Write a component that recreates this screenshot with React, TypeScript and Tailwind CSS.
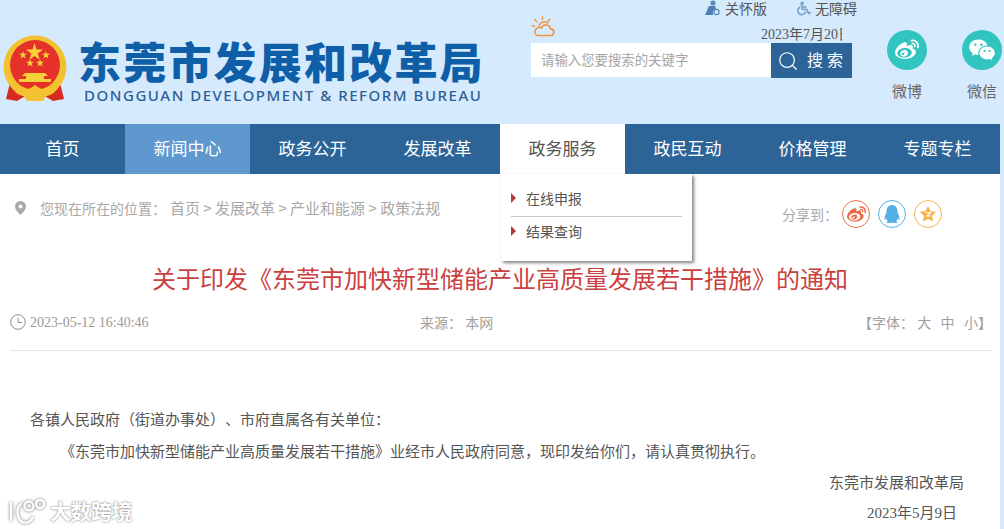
import { Search } from 'lucide-react';
import { FaWeibo, FaQq, FaWheelchair } from 'react-icons/fa';
import { RiWechatFill } from 'react-icons/ri';

const navItems = ['首页', '新闻中心', '政务公开', '发展改革', '政务服务', '政民互动', '价格管理', '专题专栏'];

function Emblem() {
  return (
    <svg width="64" height="68" viewBox="0 0 64 68">
      <path d="M8 44 L3 64 L14 66 L24 60 H40 L50 66 L61 64 L56 44 Z" fill="#d92a22" />
      <circle cx="32" cy="32" r="31.5" fill="#f2c230" />
      <circle cx="32" cy="30" r="25" fill="#e5312a" />
      <path d="M31.500 8 l2 6.500 h6.500 l-5.300 4 2 6.300 -5.200 -3.900 -5.200 3.900 2 -6.300 -5.300 -4 h6.500 z" fill="#f6d13b" />
      <g fill="#f6d13b">
        <path d="M20 16 l1 2.800 h3 l-2.400 1.800 .9 2.900 -2.500 -1.800 -2.500 1.800 .9 -2.900 -2.400 -1.800 h3 z" />
        <path d="M43 16 l1 2.800 h3 l-2.400 1.800 .9 2.900 -2.500 -1.800 -2.500 1.800 .9 -2.900 -2.400 -1.800 h3 z" />
        <path d="M27 24 l1 2.800 h3 l-2.400 1.800 .9 2.900 -2.500 -1.800 -2.500 1.800 .9 -2.900 -2.400 -1.800 h3 z" />
        <path d="M37 24 l1 2.800 h3 l-2.400 1.800 .9 2.900 -2.500 -1.800 -2.500 1.800 .9 -2.900 -2.400 -1.800 h3 z" />
        <path d="M22 38 h20 l3 3 h-4 v3 h7 v3 H16 v-3 h7 v-3 h-4 z" />
      </g>
      <path d="M11 46 C16 58 24 56 32 50 C40 56 48 58 53 46 L56 50 C50 64 40 62 32 56 C24 62 14 64 8 50 Z" fill="#f2c230" />
      <path d="M20 60 H44 L40 66 H24 Z" fill="#f2c230" />
    </svg>
  );
}

function WeatherIcon() {
  return (
    <svg width="24" height="21" viewBox="0 0 24 22" fill="none" stroke="#ee9236" strokeWidth="1.600" strokeLinecap="round">
      <path d="M8 10 a5.500 5.500 0 0 1 9 -2.500" />
      <path d="M11.500 1 v2.500 M3.500 4 l2 2 M19 3.500 l-1.500 1.700 M1 10.500 h2" />
      <path d="M6 20.500 h13.500 a3.500 3.500 0 0 0 .5 -7 a5 5 0 0 0 -9.500 -1 a4 4 0 0 0 -4.500 8 z" />
    </svg>
  );
}

function CareIcon() {
  return (
    <svg width="16" height="16" viewBox="0 0 16 16">
      <circle cx="9" cy="3" r="2.600" fill="#5b8bbb" />
      <path d="M5 6 h6 l1 3 a4 4 0 0 0 -3 5 v1 H1 Z" fill="#4f80b3" />
      <circle cx="12.500" cy="12" r="2.600" fill="none" stroke="#5b8bbb" strokeWidth="1.200" />
    </svg>
  );
}

function PinIcon() {
  return (
    <svg width="11" height="14" viewBox="0 0 11 14">
      <path fillRule="evenodd" d="M5.500 0 a5.500 5.500 0 0 1 5.500 5.500 c0 3 -3.500 6.500 -5.500 8.500 c-2 -2 -5.500 -5.500 -5.500 -8.500 a5.500 5.500 0 0 1 5.500 -5.500 z M5.500 3.500 a2 2 0 1 0 0 4 a2 2 0 0 0 0 -4 z" fill="#a8a8a8" />
    </svg>
  );
}

function ClockIcon() {
  return (
    <svg width="16" height="16" viewBox="0 0 16 16" fill="none" stroke="#8e8e8e" strokeWidth="1">
      <circle cx="8" cy="8" r="7.300" />
      <path d="M8 3.500 V8.500 H12" />
    </svg>
  );
}

function WatermarkLogo() {
  return (
    <svg width="38" height="28" viewBox="0 0 38 28" fill="none" stroke="#ffffff" strokeWidth="2.400" className="drop-shadow-[0_0_1.500px_rgba(90,90,90,0.9)]">
      <path d="M3 5 V24" />
      <path d="M14 6 C8 10 8 20 14 25 C19 27 23 24 25 20" />
      <circle cx="21" cy="9" r="4.500" />
      <circle cx="32" cy="7" r="4" />
    </svg>
  );
}

function DropItem({ label }: { label: string }) {
  return (
    <div className="flex h-[26px] items-center gap-[10px] pl-[10px]">
      <span className="h-0 w-0 border-y-[5px] border-l-[5px] border-y-transparent border-l-[#b5393a]" />
      <span className="text-[14px] text-[#555555]">{label}</span>
    </div>
  );
}

export default function App() {
  return (
    <div className="h-screen w-full overflow-hidden bg-[#d5eafd] font-['Noto_Sans_CJK_SC',sans-serif] [text-spacing-trim:space-all]">
      <div className="relative h-[529px] w-[1000px] bg-white">
        {/* Header */}
        <header className="flex h-[124px] bg-[#d5eafd]">
          <div className="flex w-[531px] shrink-0 pl-[3px] pt-[35px]">
            <Emblem />
            <div className="ml-[11px] w-[425px]">
              <div className="mt-[-1px] h-[52px] whitespace-nowrap text-[43px] font-black leading-[52px] tracking-[2.200px] text-[#0f5ea8]">
                东莞市发展和改革局
              </div>
              <div className="ml-[6px] mt-px whitespace-nowrap font-['Noto_Sans',sans-serif] text-[15px] font-medium leading-[17px] tracking-[1.530px] text-[#2d5f96]">
                DONGGUAN DEVELOPMENT &amp; REFORM BUREAU
              </div>
            </div>
          </div>

          <div className="w-[331px] shrink-0">
            <div className="flex h-[16px] items-center justify-end gap-[30px] pr-[5px] text-[14px] leading-[16px] text-[#555555]">
              <span className="flex items-center gap-[5px]"><CareIcon />关怀版</span>
              <span className="flex items-center gap-[4px]"><FaWheelchair className="h-[15px] w-[14px] text-[#7ba3cc]" />无障碍</span>
            </div>
            <div className="flex h-[27px] justify-between pr-[20px]">
              <WeatherIcon />
              <span className="mt-[8px] h-[19px] w-[81px] overflow-hidden whitespace-nowrap font-['Liberation_Serif','Noto_Sans_CJK_SC',serif] text-[14px] leading-[21px] text-[#555555]">
                2023年7月20日
              </span>
            </div>
            <div className="flex h-[35px] w-[321px]">
              <div className="flex h-[34px] w-[240px] items-center bg-white pb-[2px] pl-[10px] text-[13.400px] text-[#a5a5a5]">
                请输入您要搜索的关键字
              </div>
              <div className="flex w-[81px] items-center gap-[8px] bg-[#2d6498] pl-[6px] text-[16px] tracking-[4px] text-white">
                <Search className="h-[22px] w-[22px]" strokeWidth={1.300} />
                <span className="mb-[3px]">搜索</span>
              </div>
            </div>
          </div>

          <div className="flex flex-1 pt-[30px]">
            <div className="ml-[25px] flex w-[40px] flex-col items-center">
              <span className="flex h-[40px] w-[40px] items-center justify-center rounded-full bg-[#32c4bf]">
                <FaWeibo className="h-[24px] w-[24px] text-white" />
              </span>
              <span className="mt-[11px] whitespace-nowrap text-[15px] leading-[20px] text-[#666666]">微博</span>
            </div>
            <div className="ml-[35px] flex w-[40px] flex-col items-center">
              <span className="flex h-[40px] w-[40px] items-center justify-center rounded-full bg-[#32c4bf]">
                <RiWechatFill className="h-[28px] w-[28px] text-white" />
              </span>
              <span className="mt-[11px] whitespace-nowrap text-[15px] leading-[20px] text-[#666666]">微信</span>
            </div>
          </div>
        </header>

        {/* Nav */}
        <nav className="flex h-[50px] bg-[#2d6498]">
          {navItems.map((item) => (
            <div
              key={item}
              className={
                item === '新闻中心'
                  ? 'flex w-[125px] items-center justify-center bg-[#5f98cf] pb-[3px] text-[17px] text-white'
                  : item === '政务服务'
                    ? 'relative flex w-[125px] items-center justify-center bg-white pb-[3px] text-[17px] text-[#555555]'
                    : 'flex w-[125px] items-center justify-center pb-[3px] text-[17px] text-white'
              }
            >
              {item}
              {item === '政务服务' && (
                <div className="absolute left-px top-full z-10 h-[87px] w-[191px] bg-white pt-[11px] shadow-[2px_2px_3px_rgba(90,90,90,0.75)]">
                  <DropItem label="在线申报" />
                  <div className="mx-[10px] mb-px mt-[5px] border-t border-[#c9c9c9]" />
                  <DropItem label="结果查询" />
                </div>
              )}
            </div>
          ))}
        </nav>

        {/* Breadcrumb + share */}
        <div className="flex h-[76px] items-center pl-[15px] pr-[58px] text-[14px] text-[#a8a8a8]">
          <span className="mt-[-8px] flex items-center">
            <PinIcon />
            <span className="ml-[14px]">您现在所在的位置：</span>
            <span className="ml-[4px] text-[15px]">首页 &gt; 发展改革 &gt; 产业和能源 &gt; 政策法规</span>
          </span>
          <span className="ml-auto mt-[4px] flex items-center">
            分享到：
            <span className="ml-[4px] flex h-[28px] w-[28px] items-center justify-center rounded-full border border-[#ea7250]">
              <FaWeibo className="h-[19px] w-[19px] text-[#ea6a45]" />
            </span>
            <span className="ml-[8px] flex h-[28px] w-[28px] items-center justify-center rounded-full border border-[#55b0e6]">
              <FaQq className="h-[18px] w-[18px] text-[#55b0e6]" />
            </span>
            <span className="ml-[8px] flex h-[28px] w-[28px] items-center justify-center rounded-full border border-[#f6b64c]">
              <svg width="18" height="18" viewBox="0 0 16 16">
                <path d="M8 .8 l2.200 4.700 5 .6 -3.700 3.500 1 5.100 -4.500 -2.500 -4.500 2.500 1 -5.100 -3.700 -3.500 5 -.6 z" fill="#f5b03e" />
                <path d="M5.500 6.800 h5 l-3.500 3 h3.500" fill="none" stroke="#fff" strokeWidth="1" />
              </svg>
            </span>
          </span>
        </div>

        {/* Article */}
        <h1 className="h-[60px] pb-[4px] text-center text-[24px] font-normal leading-[56px] text-[#cb3f3f]">
          关于印发《东莞市加快新型储能产业高质量发展若干措施》的通知
        </h1>

        <div className="mx-[10px] flex h-[41px] w-[982px] items-center border-b border-[#e5e5e5] pb-[16px] text-[14px] text-[#a0a0a0]">
          <div className="flex w-[410px] items-center gap-[4px] font-['Liberation_Serif','Noto_Sans_CJK_SC',serif] text-[#9a9a9a]">
            <ClockIcon />
            2023-05-12 16:40:46
          </div>
          <div className="whitespace-nowrap">来源： 本网</div>
          <div className="ml-auto whitespace-nowrap">【字体： 大&nbsp;&nbsp;&nbsp;中&nbsp;&nbsp;&nbsp;小】</div>
        </div>

        <div className="pt-[52px] text-[15px] leading-[31.500px] text-[#555555]">
          <p className="pl-[30px]">各镇人民政府（街道办事处）、市府直属各有关单位：</p>
          <p className="pl-[60px]">《东莞市加快新型储能产业高质量发展若干措施》业经市人民政府同意，现印发给你们，请认真贯彻执行。</p>
          <p className="pl-[829px]">东莞市发展和改革局</p>
          <p className="pl-[867px] font-['Liberation_Serif','Noto_Sans_CJK_SC',serif]">2023年5月9日</p>
        </div>

        {/* Watermark */}
        <div className="absolute left-[8px] top-[495px] flex items-center gap-[4px] text-[21px] font-bold text-white [text-shadow:0_0_2px_rgba(80,80,80,0.9)]">
          <WatermarkLogo />
          <span className="tracking-[-0.500px]">大数跨境</span>
        </div>
      </div>
    </div>
  );
}
